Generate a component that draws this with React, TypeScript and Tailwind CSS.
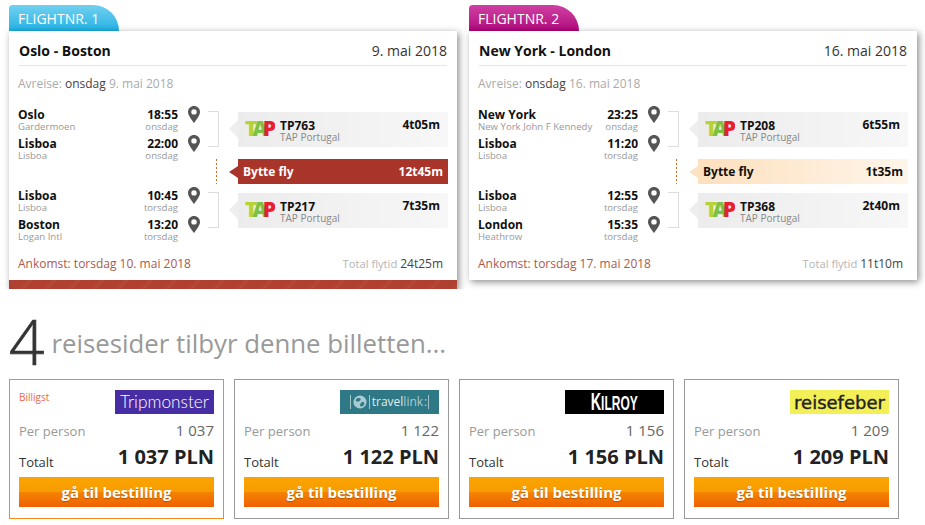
type Stop = { city: string; airport: string; time: string; day: string };
type Leg = { stops: [Stop, Stop]; code: string; duration: string };
type Flight = {
  tab: string;
  tabClass: string;
  route: string;
  date: string;
  depart: [string, string];
  legs: [Leg, Leg];
  change: string;
  changeDark: boolean;
  arrive: string;
  total: string;
  bar: boolean;
};

const FLIGHTS: Flight[] = [
  {
    tab: "FLIGHTNR. 1",
    tabClass: "bg-gradient-to-b from-[#6fd0ef] to-[#17b2e4]",
    route: "Oslo - Boston",
    date: "9. mai 2018",
    depart: ["onsdag", "9. mai 2018"],
    legs: [
      {
        stops: [
          { city: "Oslo", airport: "Gardermoen", time: "18:55", day: "onsdag" },
          { city: "Lisboa", airport: "Lisboa", time: "22:00", day: "onsdag" },
        ],
        code: "TP763",
        duration: "4t05m",
      },
      {
        stops: [
          { city: "Lisboa", airport: "Lisboa", time: "10:45", day: "torsdag" },
          { city: "Boston", airport: "Logan Intl", time: "13:20", day: "torsdag" },
        ],
        code: "TP217",
        duration: "7t35m",
      },
    ],
    change: "12t45m",
    changeDark: true,
    arrive: "torsdag 10. mai 2018",
    total: "24t25m",
    bar: true,
  },
  {
    tab: "FLIGHTNR. 2",
    tabClass: "bg-gradient-to-b from-[#cf3fa3] to-[#b0007c]",
    route: "New York - London",
    date: "16. mai 2018",
    depart: ["onsdag", "16. mai 2018"],
    legs: [
      {
        stops: [
          { city: "New York", airport: "New York John F Kennedy", time: "23:25", day: "onsdag" },
          { city: "Lisboa", airport: "Lisboa", time: "11:20", day: "torsdag" },
        ],
        code: "TP208",
        duration: "6t55m",
      },
      {
        stops: [
          { city: "Lisboa", airport: "Lisboa", time: "12:55", day: "torsdag" },
          { city: "London", airport: "Heathrow", time: "15:35", day: "torsdag" },
        ],
        code: "TP368",
        duration: "2t40m",
      },
    ],
    change: "1t35m",
    changeDark: false,
    arrive: "torsdag 17. mai 2018",
    total: "11t10m",
    bar: false,
  },
];

const OFFERS = [
  { id: "tripmonster", price: "1 037", cheapest: true },
  { id: "travellink", price: "1 122", cheapest: false },
  { id: "kilroy", price: "1 156", cheapest: false },
  { id: "reisefeber", price: "1 209", cheapest: false },
];

function Pin() {
  return (
    <svg width="12" height="17" viewBox="0 0 12 17" className="block">
      <path
        fillRule="evenodd"
        fill="#555"
        d="M6 0C2.7 0 0 2.6 0 5.9 0 9.6 4 14 6 17c2-3 6-7.4 6-11.1C12 2.6 9.3 0 6 0Zm0 3.2a2.7 2.7 0 1 1 0 5.4 2.7 2.7 0 0 1 0-5.4Z"
      />
    </svg>
  );
}

function TapLogo() {
  return (
    <svg width="30" height="18" viewBox="0 0 30 18" className="block shrink-0">
      <text x="0" y="16" fontFamily="'Open Sans', sans-serif" fontWeight="800" fontSize="21" letterSpacing="-5">
        <tspan fill="#b5d334">T</tspan>
        <tspan fill="#7cc242">A</tspan>
        <tspan fill="#e8202e">P</tspan>
      </text>
    </svg>
  );
}

function StopRow({ stop }: { stop: Stop }) {
  return (
    <div className="flex h-[29px]">
      <div className="flex w-[160px] justify-between pt-[2px]">
        <div>
          <div className="text-[12px] font-bold leading-[14px] text-[#111]">{stop.city}</div>
          <div className="text-[9.6px] leading-[10px] text-[#999]">{stop.airport}</div>
        </div>
        <div className="text-right">
          <div className="text-[12px] font-bold leading-[14px] text-[#111]">{stop.time}</div>
          <div className="text-[9.6px] leading-[10px] text-[#999]">{stop.day}</div>
        </div>
      </div>
      <div className="ml-[10px]">
        <Pin />
      </div>
    </div>
  );
}

function FlightBox({ leg }: { leg: Leg }) {
  return (
    <div className="flex h-[36px] items-center">
      <div className="h-full w-[11px] border-y border-r border-[#ddd]" />
      <div className="ml-[10px] h-0 w-0 border-y-[9px] border-r-[9px] border-y-transparent border-r-[#eee]" />
      <div className="flex h-[35px] w-[210px] items-center bg-gradient-to-r from-[#ececec] to-[#f7f7f7] pl-[7px] pr-[8px]">
        <TapLogo />
        <div className="ml-[5px] flex-1 pt-[3px]">
          <div className="text-[12px] font-bold leading-[12px] text-[#111]">{leg.code}</div>
          <div className="text-[10px] leading-[10px] text-[#888]">TAP Portugal</div>
        </div>
        <div className="mb-[8px] text-[12px] font-bold text-[#111]">{leg.duration}</div>
      </div>
    </div>
  );
}

function FlightCard({ flight }: { flight: Flight }) {
  return (
    <div className="w-[448px]">
      <div
        className={`flex h-[26px] w-[110px] items-center rounded-tl-[4px] rounded-tr-[28px] pl-[9px] pt-px text-[14px] text-white ${flight.tabClass}`}
      >
        {flight.tab}
      </div>
      <div
        className={`bg-white shadow-[2px_2px_7px_rgba(0,0,0,0.45)] ${
          flight.bar ? "[clip-path:inset(-12px_-12px_0_-12px)]" : ""
        }`}
      >
        <div className="h-[249px] pl-[10px] pr-[10px]">
          <div className="flex h-[35px] items-center justify-between border-b border-[#e5e5e5] pt-[5px]">
            <div className="text-[14px] font-bold text-[#111]">{flight.route}</div>
            <div className="text-[14px] text-[#333]">{flight.date}</div>
          </div>
          <div className="-ml-[1px] mt-[9px] text-[12px] leading-[18px] text-[#aaa]">
            Avreise: <span className="text-[#444]">{flight.depart[0]}</span> {flight.depart[1]}
          </div>
          <div className="mt-[13px] flex">
            <div className="-ml-[1px] w-[183px]">
              <StopRow stop={flight.legs[0].stops[0]} />
              <StopRow stop={flight.legs[0].stops[1]} />
              <div className="h-[23px]" />
              <StopRow stop={flight.legs[1].stops[0]} />
              <StopRow stop={flight.legs[1].stops[1]} />
            </div>
            <div className="ml-[8px] pt-[5px]">
              <FlightBox leg={flight.legs[0]} />
              <div className="mt-[12px] flex h-[25px] items-center">
                <div className="ml-[8px] h-full w-px bg-[repeating-linear-gradient(180deg,#d9691e_0,#d9691e_2px,transparent_2px,transparent_4px)]" />
                <div
                  className={`ml-[12px] h-0 w-0 border-y-[6px] border-r-[9px] border-y-transparent ${
                    flight.changeDark ? "border-r-[#a9342a]" : "border-r-[#fde3c4]"
                  }`}
                />
                <div
                  className={`flex h-[25px] w-[210px] items-center justify-between pl-[5px] pr-[5px] text-[12px] font-bold ${
                    flight.changeDark
                      ? "bg-[#a9342a] text-white"
                      : "bg-gradient-to-r from-[#fde0bd] to-[#fff5ea] text-[#111]"
                  }`}
                >
                  <span>Bytte fly</span>
                  <span>{flight.change}</span>
                </div>
              </div>
              <div className="mt-[8px]">
                <FlightBox leg={flight.legs[1]} />
              </div>
            </div>
          </div>
          <div className="mt-[10px] flex items-center justify-between text-[12px] leading-[18px]">
            <div className="-ml-[1px] text-[#ab5a4e]">Ankomst: {flight.arrive}</div>
            <div className="pr-[4px] text-[11.2px] text-[#b5b5b5]">
              Total flytid <span className="text-[12px] text-[#444]">{flight.total}</span>
            </div>
          </div>
        </div>
        {flight.bar && (
          <div className="h-[9px] bg-[repeating-linear-gradient(135deg,#af4032_0,#af4032_14px,#b34839_14px,#b34839_17px)]" />
        )}
      </div>
    </div>
  );
}

function OfferLogo({ id }: { id: string }) {
  if (id === "tripmonster") {
    return (
      <div className="flex h-[24px] w-[99px] items-center justify-center bg-[#472da3] font-['Lato',sans-serif] text-[17.3px] font-light leading-none text-white">
        Tripmonster
      </div>
    );
  }
  if (id === "travellink") {
    return (
      <div className="flex h-[24px] w-[99px] items-center justify-center gap-px bg-[#2f7885] text-[12px] leading-none text-[#dfeef0]">
        <span className="mr-px h-[14px] w-px bg-[#9fc4ca]" />
        <svg width="14" height="14" viewBox="0 0 15 15" className="block">
          <circle cx="7.5" cy="7.5" r="7" fill="#a9ccd2" />
          <path d="M3 5c2-2 4-2 5-1s-1 3-3 3-2-1-2-2Zm6 3c2-1 4 0 3 2s-3 3-4 2 0-3 1-4Z" fill="#2f7885" />
        </svg>
        <span className="mx-px h-[14px] w-px bg-[#9fc4ca]" />
        <span>
          travel<span className="text-[#a9ccd2]">link</span>
        </span>
        <span className="text-[#a9ccd2]">:</span>
        <span className="h-[14px] w-px bg-[#9fc4ca]" />
      </div>
    );
  }
  if (id === "kilroy") {
    return (
      <div className="flex h-[24px] w-[99px] items-center justify-center bg-black font-['Liberation_Sans',sans-serif] text-[20px] font-bold leading-none text-white">
        <span className="inline-block scale-x-[0.6]">
          <span className="text-[24px]">K</span>ILROY
        </span>
      </div>
    );
  }
  return (
    <div className="flex h-[24px] w-[99px] items-center justify-center bg-[#f2ef57] pt-[2px] font-['DejaVu_Sans',sans-serif] text-[18px] font-normal leading-none text-[#222] [-webkit-text-stroke:0.4px_#222]">
      reisefeber
    </div>
  );
}

function OfferCard({ offer }: { offer: (typeof OFFERS)[number] }) {
  return (
    <div
      className={`h-[140px] w-[215px] border px-[9px] pt-[10px] ${
        offer.cheapest ? "border-[#f28a1c]" : "border-[#999]"
      }`}
    >
      <div className="flex justify-between">
        <div className="text-[10px] leading-[14px] text-[#e8694a]">{offer.cheapest ? "Billigst" : ""}</div>
        <OfferLogo id={offer.id} />
      </div>
      <div className="mt-[6px] flex h-[22px] items-center justify-between">
        <span className="mt-[2px] text-[13px] text-[#999]">Per person</span>
        <span className="-mt-[1px] text-[15px] text-[#666]">{offer.price}</span>
      </div>
      <div className="mt-[4px] flex h-[28px] items-center justify-between">
        <span className="mt-[6px] text-[13px] text-[#333]">Totalt</span>
        <span className="-mt-[6px] text-[20px] font-bold text-[#222]">{offer.price} PLN</span>
      </div>
      <button className="mt-[3px] h-[30px] w-full bg-[linear-gradient(#faa400_0,#f89c00_50%,#f48400_50%,#f06000_100%)] text-[15px] font-bold text-white [text-shadow:0_1px_1px_rgba(0,0,0,0.25)]">
        gå til bestilling
      </button>
    </div>
  );
}

export default function App() {
  return (
    <div className="h-[525px] w-[925px] overflow-hidden bg-white pl-[9px] pt-[5px] font-['Open_Sans',sans-serif]">
      <div className="flex items-start gap-[12px]">
        {FLIGHTS.map((flight) => (
          <FlightCard key={flight.tab} flight={flight} />
        ))}
      </div>
      <div className="mt-[17px] flex h-[72px] items-center">
        <span className="-mt-[3px] text-[62px] font-light leading-none text-[#333] [-webkit-text-stroke:0.7px_#333]">
          4
        </span>
        <span className="ml-[7px] mt-[3px] text-[25.8px] text-[#999]">reisesider tilbyr denne billetten...</span>
      </div>
      <div className="mt-[1px] flex gap-[10px]">
        {OFFERS.map((offer) => (
          <OfferCard key={offer.id} offer={offer} />
        ))}
      </div>
    </div>
  );
}
